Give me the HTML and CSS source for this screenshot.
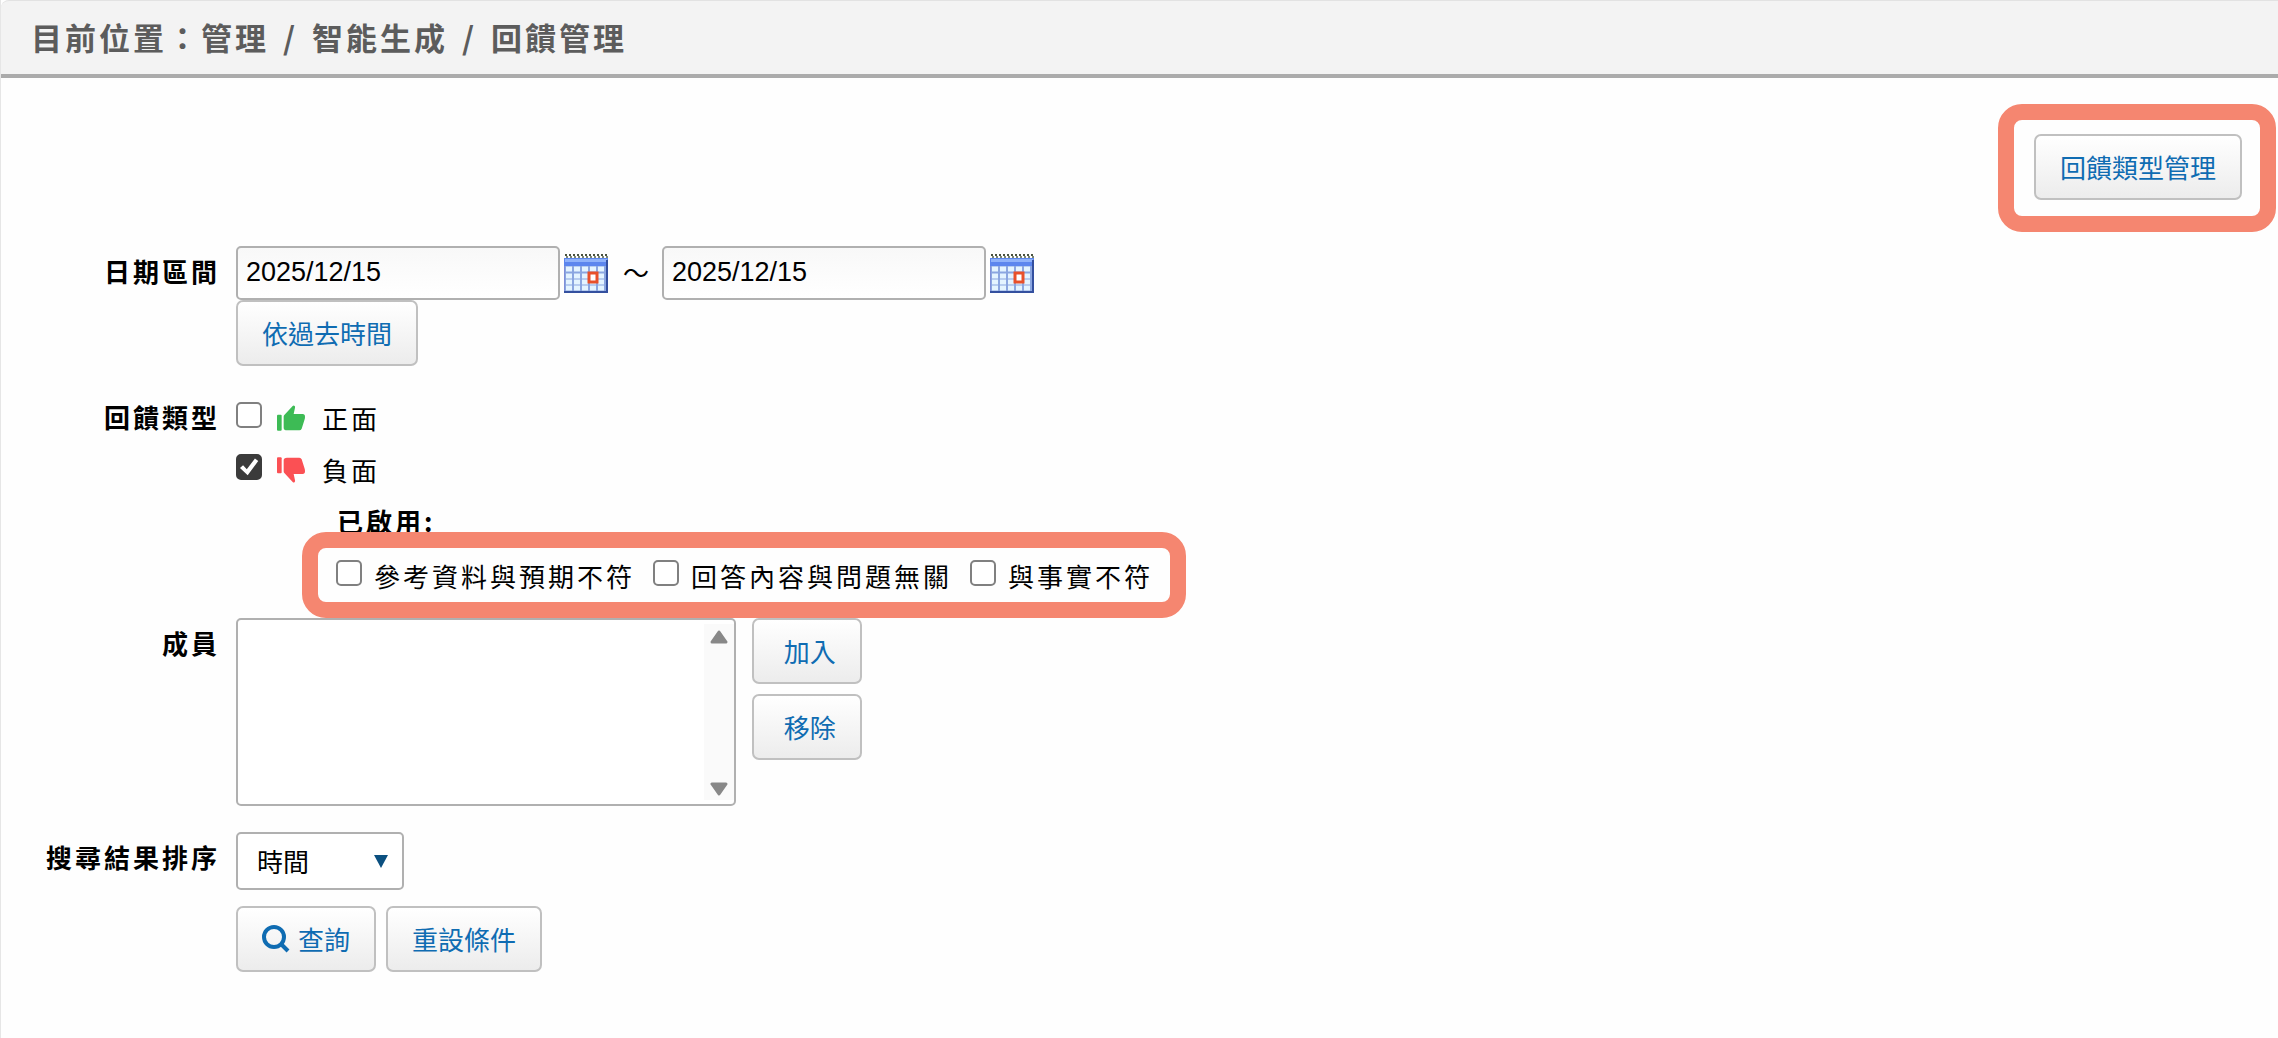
FILE: index.html
```html
<!DOCTYPE html>
<html lang="zh-Hant">
<head>
	<meta charset="UTF-8">
	<meta name="viewport" content="width=device-width, initial-scale=1.0">
	<title>回饋管理</title>
	<link rel="stylesheet" href="styles.css">
</head>
<body>
	<!-- shared icons -->
	<svg class="defs" width="0" height="0" aria-hidden="true">
		<symbol id="icon-thumb" viewBox="0 0 84 76">
			<path d="M0 31q0-3 3-3h8q3 0 3 3v42q0 3-3 3H3q-3 0-3-3z"/>
			<path d="M20 34q0-3 2-5L47 2q3-3 6 0 2 2 1 5l-4 19h27q7 0 7 8 0 5-1 8l-9 28q-2 5-7 5H30q-10 0-10-8z"/>
		</symbol>
		<symbol id="icon-calendar" viewBox="0 0 44 39">
			<rect x="0" y="4" width="44" height="35" fill="#7f8fd8"/>
			<rect x="0" y="4" width="44" height="8" fill="#5c86ee"/>
			<rect x="1" y="5" width="42" height="3" fill="#8fb2fa"/>
			<rect x="1" y="12" width="41" height="25" fill="#8ba6e0"/>
			<path d="M2 15h40M2 22h40M2 28h40M2 34h40" stroke="#e4f4ff" stroke-width="5" stroke-dasharray="6 2"/>
			<path d="M0 38h44M43 6v33" stroke="#34509f" stroke-width="2"/>
			<path d="M1 1h43" stroke="#49523f" stroke-width="2" stroke-dasharray="2 2"/>
			<path d="M2 3h42" stroke="#7c8672" stroke-width="2" stroke-dasharray="2 2"/>
			<rect x="25" y="19" width="8" height="9" fill="#fff" stroke="#e8502a" stroke-width="3"/>
		</symbol>
	</svg>

	<header class="breadcrumb">
		<span>目前位置：管理</span>
		<span class="slash">/</span>
		<span>智能生成</span>
		<span class="slash">/</span>
		<span>回饋管理</span>
	</header>

	<main>
		<div class="toolbar">
			<div class="highlight">
				<button type="button" class="button">回饋類型管理</button>
			</div>
		</div>

		<form class="search-form" onsubmit="return false">
			<label class="label" for="date-from">日期區間</label>
			<div class="field">
				<div class="date-range">
					<input type="text" class="text-input" id="date-from" value="2025/12/15">
					<button type="button" class="calendar" aria-label="開始日期"><svg><use href="#icon-calendar"/></svg></button>
					<span class="tilde">～</span>
					<input type="text" class="text-input" id="date-to" aria-label="結束日期" value="2025/12/15">
					<button type="button" class="calendar" aria-label="結束日期"><svg><use href="#icon-calendar"/></svg></button>
				</div>
				<button type="button" class="button">依過去時間</button>
			</div>

			<span class="label">回饋類型</span>
			<div class="field feedback">
				<label class="check thumb-check">
					<input type="checkbox" name="feedback" value="positive">
					<svg class="thumb up"><use href="#icon-thumb"/></svg>
					<span>正面</span>
				</label>
				<label class="check thumb-check">
					<input type="checkbox" name="feedback" value="negative" checked>
					<svg class="thumb down"><use href="#icon-thumb"/></svg>
					<span>負面</span>
				</label>
				<div class="reasons">
					<div class="reasons-title">已啟用:</div>
					<div class="reason-list highlight">
						<label class="check"><input type="checkbox" name="reason" value="1"><span>參考資料與預期不符</span></label>
						<label class="check"><input type="checkbox" name="reason" value="2"><span>回答內容與問題無關</span></label>
						<label class="check"><input type="checkbox" name="reason" value="3"><span>與事實不符</span></label>
					</div>
				</div>
			</div>

			<label class="label" for="members">成員</label>
			<div class="field members">
				<div class="listbox">
					<select id="members" multiple></select>
					<div class="scroll">
						<svg viewBox="0 0 18 14"><path d="M9 2L16 12H2z"/></svg>
						<svg viewBox="0 0 18 14"><path d="M9 12L2 2h14z"/></svg>
					</div>
				</div>
				<div class="member-buttons">
					<button type="button" class="button">&nbsp;加入</button>
					<button type="button" class="button">&nbsp;移除</button>
				</div>
			</div>

			<label class="label" for="sort">搜尋結果排序</label>
			<div class="field">
				<div class="sort">
					<select id="sort">
						<option>時間</option>
					</select>
					<svg viewBox="0 0 14 13"><path d="M0 0h14L7 13z"/></svg>
				</div>
				<div class="actions">
					<button type="submit" class="button search">
						<svg viewBox="0 0 28 28"><circle cx="12" cy="12" r="10"/><path d="M19 19l7 7"/></svg>
						查詢
					</button>
					<button type="reset" class="button">重設條件</button>
				</div>
			</div>
		</form>
	</main>
</body>
</html>
```
FILE: styles.css
```css
* {
	box-sizing: border-box;
}
body {
	margin: 0;
	min-height: 100vh;
	background-color: #fefefe;
	border-left: 1px solid #e6e6e6;
	color: #000;
	font-family: "Noto Sans CJK TC", sans-serif;
	font-size: 26px;
}
button, input, select {
	font-family: inherit;
	font-size: inherit;
	margin: 0;
}
.defs {
	position: absolute;
}

.breadcrumb {
	display: flex;
	height: 78px;
	padding-left: 30px;
	line-height: 72px;
	font-size: 31px;
	font-weight: bold;
	letter-spacing: 3px;
	color: #5c5c5c;
	background-color: #f3f3f3;
	border-top: 1px solid #e2e2e2;
	border-bottom: 4px solid #ababab;
	border-top-left-radius: 8px;
}
.slash {
	padding: 0 14px;
}

.toolbar {
	display: flex;
	justify-content: flex-end;
	padding: 56px 36px 46px 0;
}

/* red frame drawn over the content */
.highlight {
	position: relative;
}
.highlight::after {
	content: "";
	position: absolute;
	inset: -30px -34px -32px -36px;
	border: 16px solid #f58670;
	border-radius: 24px;
	pointer-events: none;
}

.button {
	display: inline-flex;
	align-items: center;
	height: 66px;
	padding: 0 24px 2px;
	color: #0f6cb2;
	background: linear-gradient(#fff, #ececec);
	border: 2px solid #c0c0c0;
	border-radius: 7px;
	cursor: pointer;
}

.search-form {
	display: grid;
	grid-template-columns: 219px 1fr;
	column-gap: 16px;
}
.label {
	line-height: 50px;
	font-weight: bold;
	letter-spacing: 3px;
	text-align: right;
}
.field {
	display: flex;
	flex-direction: column;
	align-items: flex-start;
	margin-bottom: 26px;
}

.date-range {
	display: flex;
	align-items: center;
}
.text-input {
	width: 324px;
	height: 54px;
	padding: 0 8px 2px;
	font-family: "Liberation Sans", sans-serif;
	font-size: 27px;
	background: linear-gradient(#f8f8f8, #fff);
	border: 2px solid #b0b0b0;
	border-radius: 5px;
}
.calendar {
	padding: 0;
	margin: 0 2px 0 4px;
	background: none;
	border: none;
	cursor: pointer;
}
.calendar svg {
	display: block;
	width: 44px;
	height: 39px;
}
.tilde {
	width: 52px;
	padding-bottom: 4px;
	text-align: center;
}

.feedback {
	margin-bottom: 18px;
}
.check {
	display: flex;
	align-items: center;
	gap: 12px;
	height: 52px;
	letter-spacing: 3px;
}
.check span {
	margin-bottom: 2px;
}
.check input {
	appearance: none;
	width: 26px;
	height: 26px;
	margin-bottom: 6px;
	background-color: #fff;
	border: 2px solid #808080;
	border-radius: 5px;
}
.check input:checked {
	background-color: #3b3b3b;
	border-color: #3b3b3b;
}
.check input:checked::before {
	content: "";
	display: block;
	height: 22px;
	background-color: #fff;
	clip-path: polygon(9% 54%, 23% 42%, 40% 60%, 77% 11%, 92% 23%, 44% 88%);
}
.thumb-check {
	gap: 15px;
}
.thumb {
	width: 28px;
	height: 26px;
	margin-right: 2px;
}
.up {
	fill: #3dbb55;
}
.down {
	fill: #fb5054;
	transform: scaleY(-1);
}
.reasons {
	margin-left: 100px;
}
.reasons-title {
	line-height: 50px;
	padding: 0 1px 4px;
	font-weight: bold;
	letter-spacing: 3px;
}
.reason-list {
	display: flex;
	gap: 18px;
	margin-bottom: -2px;
}
.reason-list::after {
	inset: -18px -33px -16px -34px;
}

.members {
	flex-direction: row;
	gap: 16px;
}
.listbox {
	display: flex;
	width: 500px;
	height: 188px;
	background-color: #fff;
	border: 2px solid #b0b0b0;
	border-radius: 5px;
}
.listbox select {
	flex: 1;
	background: none;
	border: none;
}
.scroll {
	display: flex;
	flex-direction: column;
	justify-content: space-between;
	align-items: center;
	width: 30px;
	margin: 4px 0;
	padding: 6px 0 4px;
	background-color: #fafafa;
}
.scroll svg {
	width: 18px;
	height: 14px;
	fill: #888;
	stroke: #888;
	stroke-width: 3;
	stroke-linejoin: round;
}
.member-buttons {
	display: flex;
	flex-direction: column;
	gap: 10px;
}

.sort {
	position: relative;
}
.sort select {
	appearance: none;
	width: 168px;
	height: 58px;
	padding: 0 19px 2px;
	color: #000;
	background-color: #fff;
	border: 2px solid #b0b0b0;
	border-radius: 5px;
}
.sort svg {
	position: absolute;
	top: 23px;
	right: 16px;
	width: 14px;
	height: 13px;
	fill: #0b5080;
	pointer-events: none;
}
.actions {
	display: flex;
	gap: 10px;
	margin-top: 16px;
}
.search {
	gap: 8px;
}
.search svg {
	width: 28px;
	height: 28px;
	margin-top: 2px;
	fill: none;
	stroke: #0f6cb2;
	stroke-width: 4;
}
```
